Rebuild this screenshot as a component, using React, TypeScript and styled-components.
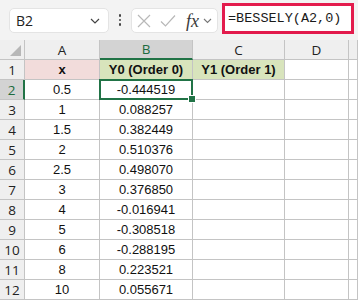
import React from 'react';
import styled, { createGlobalStyle, css } from 'styled-components';

const GlobalStyle = createGlobalStyle`
  html, body {
    margin: 0;
    padding: 0;
    background: #ffffff;
  }
  body {
    width: 358px;
    height: 302px;
    overflow: hidden;
    font-family: "Liberation Sans", Arial, sans-serif;
  }
`;

const rows: [string, string, string, string][] = [
  ['x', 'Y0 (Order 0)', 'Y1 (Order 1)', ''],
  ['0.5', '-0.444519', '', ''],
  ['1', '0.088257', '', ''],
  ['1.5', '0.382449', '', ''],
  ['2', '0.510376', '', ''],
  ['2.5', '0.498070', '', ''],
  ['3', '0.376850', '', ''],
  ['4', '-0.016941', '', ''],
  ['5', '-0.308518', '', ''],
  ['6', '-0.288195', '', ''],
  ['8', '0.223521', '', ''],
  ['10', '0.055671', '', ''],
];

const columns = ['A', 'B', 'C', 'D', ''];

export default function App() {
  return (
    <>
      <GlobalStyle />
      <Page>
        <FormulaBar>
          <NameBox>
            <span>B2</span>
            <svg width="10" height="6" viewBox="0 0 10 6">
              <path d="M1 1 L5 5 L9 1" fill="none" stroke="#444" strokeWidth="1.2" />
            </svg>
          </NameBox>
          <Dots>
            <i />
            <i />
            <i />
          </Dots>
          <Tools>
            <svg width="14" height="14" viewBox="0 0 14 14">
              <path d="M1 1 L13 13 M13 1 L1 13" stroke="#b8b8b8" strokeWidth="1.2" />
            </svg>
            <svg width="16" height="14" viewBox="0 0 16 14">
              <path d="M1 7.5 L5.5 12 L15 1.5" fill="none" stroke="#b8b8b8" strokeWidth="1.2" />
            </svg>
            <Fx>fx</Fx>
            <svg width="9" height="6" viewBox="0 0 9 6">
              <path d="M1 1 L4.5 4.5 L8 1" fill="none" stroke="#777" strokeWidth="1.1" />
            </svg>
          </Tools>
          <FormulaInput>=BESSELY(A2,0)</FormulaInput>
        </FormulaBar>

        <Sheet>
          <Corner />
          {columns.map((c, i) => (
            <ColHeader key={i} $selected={c === 'B'}>
              {c}
            </ColHeader>
          ))}
          {rows.map((r, ri) => {
            const rowNum = ri + 1;
            return (
              <React.Fragment key={rowNum}>
                <RowHeader $selected={rowNum === 2}>{rowNum}</RowHeader>
                {r.map((v, ci) => (
                  <Cell
                    key={ci}
                    $bold={rowNum === 1}
                    $fill={rowNum === 1 ? (ci === 0 ? 'pink' : ci < 3 ? 'green' : undefined) : undefined}
                    $selected={rowNum === 2 && ci === 1}
                  >
                    {v}
                  </Cell>
                ))}
                <Cell />
              </React.Fragment>
            );
          })}
        </Sheet>
      </Page>
    </>
  );
}

const Page = styled.div`
  width: 358px;
  height: 302px;
  overflow: hidden;
  background: #ffffff;
`;

const FormulaBar = styled.div`
  height: 40px;
  box-sizing: border-box;
  background: #f3f3f3;
  display: flex;
  align-items: flex-start;
  padding-left: 9px;
`;

const NameBox = styled.div`
  margin-top: 8px;
  width: 100px;
  height: 25px;
  box-sizing: border-box;
  background: #ffffff;
  border: 1px solid #e4e4e4;
  border-radius: 5px;
  display: flex;
  align-items: center;
  justify-content: space-between;
  padding: 0 8px 0 6px;
  font-family: "Open Sans", sans-serif;
  font-size: 14px;
  color: #222;
`;

const Dots = styled.div`
  width: 22px;
  height: 40px;
  display: flex;
  flex-direction: column;
  align-items: center;
  justify-content: center;
  gap: 2px;

  i {
    display: block;
    width: 2.5px;
    height: 2.5px;
    border-radius: 50%;
    background: #444;
  }
`;

const Tools = styled.div`
  margin-top: 8px;
  width: 87px;
  height: 25px;
  box-sizing: border-box;
  background: #ffffff;
  border: 1px solid #e4e4e4;
  border-radius: 5px;
  display: flex;
  align-items: center;
  padding: 0 4px 0 5px;
  gap: 9px;
`;

const Fx = styled.span`
  font-family: "Liberation Serif", serif;
  font-style: italic;
  font-size: 18px;
  color: #3a3a3a;
  margin-left: 1px;
  margin-right: -5px;
  line-height: 1;
`;

const FormulaInput = styled.div`
  margin-top: 3px;
  margin-left: 4px;
  width: 132px;
  height: 31px;
  box-sizing: border-box;
  background: #ffffff;
  border: 3px solid #e31c4d;
  display: flex;
  align-items: center;
  padding-left: 3px;
  font-family: "Liberation Mono", monospace;
  font-size: 13.5px;
  color: #1a1a1a;
`;

const Sheet = styled.div`
  display: grid;
  grid-template-columns: 25px 75px 93px 92px 64px 1fr;
  grid-auto-rows: 20px;
`;

const headerBase = css`
  box-sizing: border-box;
  background: #efefef;
  border-right: 1px solid #c4c4c4;
  border-bottom: 1px solid #c4c4c4;
  display: flex;
  align-items: center;
  justify-content: center;
  font-family: "Open Sans", sans-serif;
  font-size: 13.5px;
  color: #222;
`;

const Corner = styled.div`
  ${headerBase};
  position: relative;

  &::after {
    content: '';
    position: absolute;
    right: 3px;
    bottom: 3px;
    border-style: solid;
    border-width: 0 0 11px 11px;
    border-color: transparent transparent #b7b7b7 transparent;
  }
`;

const ColHeader = styled.div<{ $selected?: boolean }>`
  ${headerBase};
  ${(p) =>
    p.$selected &&
    css`
      background: #d3d3d3;
      color: #1d6b3e;
      border-bottom: 2px solid #217346;
    `}
`;

const RowHeader = styled.div<{ $selected?: boolean }>`
  ${headerBase};
  ${(p) =>
    p.$selected &&
    css`
      background: #d3d3d3;
      color: #1d6b3e;
      border-right: 2px solid #217346;
    `}
`;

const fills: Record<string, string> = {
  pink: '#f2dcdb',
  green: '#d8e4bc',
};

const Cell = styled.div<{ $bold?: boolean; $fill?: string; $selected?: boolean }>`
  position: relative;
  box-sizing: border-box;
  border-right: 1px solid #c4c4c4;
  border-bottom: 1px solid #c4c4c4;
  background: ${(p) => (p.$fill ? fills[p.$fill] : '#ffffff')};
  display: flex;
  align-items: center;
  justify-content: center;
  font-family: "Liberation Sans", Arial, sans-serif;
  font-size: 13px;
  font-weight: ${(p) => (p.$bold ? 700 : 400)};
  color: #111;
  white-space: nowrap;

  ${(p) =>
    p.$selected &&
    css`
      &::after {
        content: '';
        position: absolute;
        left: -1px;
        top: -1px;
        right: -1px;
        bottom: -1px;
        border: 2px solid #217346;
        pointer-events: none;
      }
      &::before {
        content: '';
        position: absolute;
        right: -4px;
        bottom: -4px;
        width: 6px;
        height: 6px;
        background: #217346;
        border: 1px solid #ffffff;
        z-index: 2;
      }
    `}
`;
